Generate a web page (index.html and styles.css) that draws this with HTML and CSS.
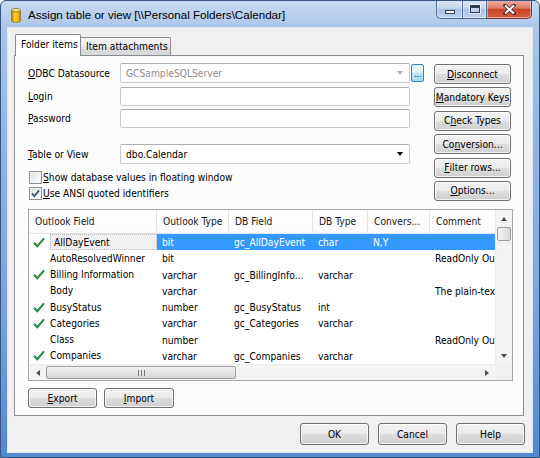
FILE: index.html
```html
<!DOCTYPE html>
<html>
<head>
<meta charset="utf-8">
<title>Assign table or view</title>
<link rel="stylesheet" href="styles.css">
</head>
<body>
<div class="window">
  <div class="titlebar">
    <svg class="appicon" width="10" height="15" viewBox="0 0 10 15">
      <defs>
        <linearGradient id="cyl" x1="0" x2="1" y1="0" y2="0">
          <stop offset="0" stop-color="#b87800"/>
          <stop offset="0.35" stop-color="#ffd23c"/>
          <stop offset="0.7" stop-color="#f5bb17"/>
          <stop offset="1" stop-color="#c98600"/>
        </linearGradient>
      </defs>
      <path d="M0.6 2.2 V12.6 A4.4 1.8 0 0 0 9.4 12.6 V2.2 Z" fill="url(#cyl)" stroke="#8a5a00" stroke-width="0.7"/>
      <ellipse cx="5" cy="2.2" rx="4.4" ry="1.7" fill="#ffe680" stroke="#8a5a00" stroke-width="0.7"/>
    </svg>
    <span class="title">Assign table or view [\\Personal Folders\Calendar]</span>
    <div class="caption">
      <div class="cbtn min"><span class="min-ico"></span></div>
      <div class="cbtn max"><span class="max-ico"></span></div>
      <div class="cbtn close">
        <svg width="13" height="11" viewBox="0 0 13 11">
          <path d="M2 1.5 L11 9.5 M11 1.5 L2 9.5" stroke="#3a2a2a" stroke-width="3.6" stroke-linecap="round"/>
          <path d="M2 1.5 L11 9.5 M11 1.5 L2 9.5" stroke="#ffffff" stroke-width="2"/>
        </svg>
      </div>
    </div>
  </div>

  <div class="client">
    <div class="tabs">
      <div class="tab active">Folder items</div>
      <div class="tab">Item attachments</div>
    </div>

    <div class="panel">
      <div class="top">
        <div class="form">
          <div class="row r1">
            <span class="lbl"><u>O</u>DBC Datasource</span>
            <div class="combo disabled"><span class="val">GCSampleSQLServer</span><i class="tri grey"></i></div>
            <div class="dots">...</div>
          </div>
          <div class="row r2">
            <span class="lbl"><u>L</u>ogin</span>
            <div class="edit"></div>
          </div>
          <div class="row r3">
            <span class="lbl"><u>P</u>assword</span>
            <div class="edit"></div>
          </div>
          <div class="row r4">
            <span class="lbl"><u>T</u>able or View</span>
            <div class="combo"><span class="val">dbo.Calendar</span><i class="tri"></i></div>
          </div>
          <div class="cbrow first">
            <span class="cb"></span>
            <span><u>S</u>how database values in floating window</span>
          </div>
          <div class="cbrow">
            <span class="cb">
              <svg width="9" height="9" viewBox="0 0 9 9"><path d="M1 4.6 L3.4 7.2 L8 1.4" fill="none" stroke="#3d4f80" stroke-width="1.7"/></svg>
            </span>
            <span><u>U</u>se ANSI quoted identifiers</span>
          </div>
        </div>
        <div class="side">
          <div class="btn"><u>D</u>isconnect</div>
          <div class="btn"><u>M</u>andatory Keys</div>
          <div class="btn">C<u>h</u>eck Types</div>
          <div class="btn">Co<u>n</u>version...</div>
          <div class="btn"><u>F</u>ilter rows...</div>
          <div class="btn"><u>O</u>ptions...</div>
        </div>
      </div>

      <div class="grid">
        <div class="table">
          <div class="hrow">
            <div class="hc">Outlook Field</div>
            <div class="hc">Outlook Type</div>
            <div class="hc">DB Field</div>
            <div class="hc">DB Type</div>
            <div class="hc">Convers...</div>
            <div class="hc">Comment</div>
          </div>
          <div class="drow sel">
            <div class="c first"><span class="chk"><svg width="12" height="11" viewBox="0 0 12 11"><path d="M1 5.8 L4.3 9.2 L11 1.4" fill="none" stroke="#26893c" stroke-width="2.1"/></svg></span><span class="focus">AllDayEvent</span></div>
            <div class="c">bit</div>
            <div class="c">gc_AllDayEvent</div>
            <div class="c">char</div>
            <div class="c">N,Y</div>
            <div class="c"></div>
          </div>
          <div class="drow">
            <div class="c first"><span class="chk"></span><span>AutoResolvedWinner</span></div>
            <div class="c">bit</div>
            <div class="c"></div>
            <div class="c"></div>
            <div class="c"></div>
            <div class="c">ReadOnly Outlook property</div>
          </div>
          <div class="drow">
            <div class="c first"><span class="chk"><svg width="12" height="11" viewBox="0 0 12 11"><path d="M1 5.8 L4.3 9.2 L11 1.4" fill="none" stroke="#26893c" stroke-width="2.1"/></svg></span><span>Billing Information</span></div>
            <div class="c">varchar</div>
            <div class="c">gc_BillingInfo...</div>
            <div class="c">varchar</div>
            <div class="c"></div>
            <div class="c"></div>
          </div>
          <div class="drow">
            <div class="c first"><span class="chk"></span><span>Body</span></div>
            <div class="c">varchar</div>
            <div class="c"></div>
            <div class="c"></div>
            <div class="c"></div>
            <div class="c">The plain-text body of the item</div>
          </div>
          <div class="drow">
            <div class="c first"><span class="chk"><svg width="12" height="11" viewBox="0 0 12 11"><path d="M1 5.8 L4.3 9.2 L11 1.4" fill="none" stroke="#26893c" stroke-width="2.1"/></svg></span><span>BusyStatus</span></div>
            <div class="c">number</div>
            <div class="c">gc_BusyStatus</div>
            <div class="c">int</div>
            <div class="c"></div>
            <div class="c"></div>
          </div>
          <div class="drow">
            <div class="c first"><span class="chk"><svg width="12" height="11" viewBox="0 0 12 11"><path d="M1 5.8 L4.3 9.2 L11 1.4" fill="none" stroke="#26893c" stroke-width="2.1"/></svg></span><span>Categories</span></div>
            <div class="c">varchar</div>
            <div class="c">gc_Categories</div>
            <div class="c">varchar</div>
            <div class="c"></div>
            <div class="c"></div>
          </div>
          <div class="drow">
            <div class="c first"><span class="chk"></span><span>Class</span></div>
            <div class="c">number</div>
            <div class="c"></div>
            <div class="c"></div>
            <div class="c"></div>
            <div class="c">ReadOnly Outlook property</div>
          </div>
          <div class="drow">
            <div class="c first"><span class="chk"><svg width="12" height="11" viewBox="0 0 12 11"><path d="M1 5.8 L4.3 9.2 L11 1.4" fill="none" stroke="#26893c" stroke-width="2.1"/></svg></span><span>Companies</span></div>
            <div class="c">varchar</div>
            <div class="c">gc_Companies</div>
            <div class="c">varchar</div>
            <div class="c"></div>
            <div class="c"></div>
          </div>
        </div>
        <div class="vscroll">
          <div class="sarrow"><i class="up"></i></div>
          <div class="vthumb"></div>
          <div class="vtrack"></div>
          <div class="sarrow"><i class="down"></i></div>
        </div>
        <div class="hscroll">
          <div class="sarrow h"><i class="left"></i></div>
          <div class="hthumb"><span class="grip"></span></div>
          <div class="htrack"></div>
          <div class="sarrow h"><i class="right"></i></div>
        </div>
        <div class="corner"></div>
      </div>

      <div class="actions">
        <div class="btn export"><u>E</u>xport</div>
        <div class="btn import"><u>I</u>mport</div>
      </div>
    </div>

    <div class="footer">
      <div class="btn fbtn">OK</div>
      <div class="btn fbtn">Cancel</div>
      <div class="btn fbtn">Help</div>
    </div>
  </div>
</div>
</body>
</html>
```

FILE: styles.css
```css
* { box-sizing: border-box; }
html, body { margin: 0; padding: 0; }
body {
  width: 540px;
  height: 458px;
  overflow: hidden;
  background: #ffffff;
  font-family: "DejaVu Sans Condensed", "Liberation Sans", sans-serif;
  font-stretch: condensed;
  font-size: 10.2px;
  color: #000;
}
u { text-decoration: underline; text-underline-offset: 1px; }

.window {
  width: 540px;
  height: 458px;
  border: 1px solid #34557f;
  border-radius: 6px 6px 0 0;
  background: linear-gradient(180deg, #c6daf2 0px, #b8d0ee 14px, #abc6e9 27px, #94b7e3 120px, #7aa5dc 300px, #5189d0 458px);
  display: flex;
  flex-direction: column;
  overflow: hidden;
}

/* title bar */
.titlebar {
  height: 27px;
  display: flex;
  align-items: flex-start;
  flex: 0 0 27px;
}
.appicon { margin: 7px 0 0 10px; flex: 0 0 auto; }
.title {
  margin: 6px 0 0 7px;
  font-family: "Liberation Sans", sans-serif;
  font-stretch: normal;
  font-size: 11.6px;
  line-height: 15px;
  color: #000;
  white-space: nowrap;
}
.caption {
  margin-left: auto;
  margin-right: 7px;
  margin-top: -1px;
  display: flex;
}
.cbtn {
  height: 19px;
  border: 1px solid #4d6b93;
  border-top: none;
  display: flex;
  align-items: center;
  justify-content: center;
  background: linear-gradient(180deg, #dbe7f6 0%, #c4d7ef 45%, #a9c2e5 52%, #bcd2ee 100%);
  box-shadow: inset 0 0 0 1px rgba(255,255,255,0.45);
}
.cbtn.min { width: 26px; border-radius: 0 0 0 5px; border-right: none; }
.cbtn.max { width: 25px; }
.cbtn.close {
  width: 45px;
  border-left: none;
  border-radius: 0 0 5px 0;
  background: linear-gradient(180deg, #eab1a3 0%, #dc7c66 45%, #c7402a 52%, #d6603f 100%);
  border-color: #7a3a32;
}
.min-ico {
  width: 10px; height: 4px; margin-top: 6px;
  background: #fff; border: 1px solid #2e3b52;
}
.max-ico {
  width: 10px; height: 8px;
  border: 1px solid #2e3b52;
  border-top-width: 3px;
  background: rgba(255,255,255,0.2);
  box-shadow: 0 0 0 1px rgba(255,255,255,0.6);
}

/* client */
.client {
  margin: 0 7px;
  height: 424px;
  flex: 0 0 424px;
  background: #f0f0f0;
  box-shadow: 0 0 0 1px #dfe9f6;
  display: flex;
  flex-direction: column;
}

.tabs {
  display: flex;
  align-items: flex-end;
  height: 27px;
  padding: 6px 0 0 7px;
  flex: 0 0 27px;
}
.tab {
  height: 18px;
  padding: 0 5px;
  border: 1px solid #898c95;
  border-bottom: none;
  border-radius: 2px 2px 0 0;
  background: linear-gradient(180deg, #f3f3f3 0%, #ececec 50%, #e0e0e0 51%, #d6d6d6 100%);
  line-height: 17px;
  white-space: nowrap;
}
.tab.active {
  width: 66px;
  height: 22px;
  margin-bottom: -1px;
  background: #ffffff;
  position: relative;
  z-index: 1;
  line-height: 19px;
  padding-left: 5px;
}
.tab:not(.active) { width: 90px; border-left: none; border-radius: 0 2px 0 0; }

.panel {
  margin: 0 8px 0 6px;
  height: 361px;
  flex: 0 0 361px;
  border: 1px solid #898c95;
  background: #fcfcfc;
  padding: 7px 12px 7px 13px;
  display: flex;
  flex-direction: column;
}

.top { display: flex; align-items: flex-start; height: 138px; flex: 0 0 138px; }
.form { width: 396px; display: flex; flex-direction: column; }
.row { display: flex; align-items: center; }
.r1 { height: 20px; }
.r2 { height: 19px; margin-top: 4px; }
.r3 { height: 19px; margin-top: 3px; }
.r4 { height: 20px; margin-top: 16px; }
.lbl { width: 92px; flex: 0 0 92px; white-space: nowrap; }

.edit, .combo {
  width: 290px;
  height: 100%;
  border: 1px solid #c6cad1;
  border-top-color: #abadb3;
  border-radius: 2px;
  background: #fff;
}
.combo { display: flex; align-items: center; padding-left: 5px; }
.combo .val { flex: 1; }
.combo.disabled .val { color: #8d8d8d; }
.tri {
  width: 0; height: 0;
  border-left: 3.5px solid transparent;
  border-right: 3.5px solid transparent;
  border-top: 4px solid #000;
  margin-right: 6px;
}
.tri.grey { border-top-color: #b4b4b4; }

.dots {
  width: 13px; height: 18px;
  margin-left: 1px;
  border: 1px solid #3c7fb1;
  border-radius: 2px;
  background: linear-gradient(180deg, #eaf6fd 0%, #d9f0fc 50%, #bee6fd 51%, #a7d9f5 100%);
  font-size: 9.5px;
  line-height: 18px;
  text-align: center;
  letter-spacing: -0.3px;
  color: #1d3f6b;
  overflow: hidden;
}

.cbrow { display: flex; align-items: center; height: 15px; margin-top: 1px; white-space: nowrap; }
.cbrow.first { margin-top: 6px; }
.cb {
  width: 13px; height: 13px;
  margin: 0 1px 0 1px;
  border: 1px solid #8e8f8f;
  background: linear-gradient(135deg, #dcdcdc 0%, #f4f4f4 60%, #ffffff 100%);
  box-shadow: inset 0 0 0 1px #f4f4f4;
  display: flex; align-items: center; justify-content: center;
}

.side {
  margin-left: 10px;
  margin-top: 1px;
  width: 77px;
  display: flex;
  flex-direction: column;
  gap: 3.4px;
}
.btn {
  height: 20px;
  border: 1px solid #707070;
  border-radius: 3px;
  background: linear-gradient(180deg, #f2f2f2 0%, #ebebeb 48%, #dddddd 52%, #cfcfcf 100%);
  box-shadow: inset 0 0 0 1px rgba(255,255,255,0.7);
  display: flex;
  align-items: center;
  justify-content: center;
  white-space: nowrap;
  color: #000;
}

/* list grid */
.grid {
  margin-top: 8px;
  width: 485px;
  height: 172px;
  flex: 0 0 172px;
  border: 1px solid #a3a6ac;
  display: grid;
  grid-template-columns: 466px 17px;
  grid-template-rows: 154px 16px;
  background: #fff;
}
.table { overflow: hidden; background: #fff; }
.hrow, .drow {
  display: grid;
  grid-template-columns: 128px 72px 84px 55px 62px 200px;
  width: 601px;
}
.hrow { height: 24px; border-bottom: 1px solid #e5e5e5; background: linear-gradient(180deg, #ffffff, #fafafa); }
.hc {
  padding: 1px 0 0 6px;
  line-height: 22px;
  border-right: 1px solid #e5e5e5;
  color: #1a1a1a;
  white-space: nowrap;
  overflow: hidden;
}
.drow { height: 16.25px; }
.c {
  padding: 1px 0 0 5px;
  line-height: 15.25px;
  white-space: nowrap;
  overflow: hidden;
}
.c.first { padding: 0; display: flex; align-items: center; }
.chk { width: 21px; flex: 0 0 21px; padding-left: 4px; display: flex; align-items: center; }
.drow.sel .c:not(.first) { background: #3399ff; color: #fff; }
.focus {
  flex: 1;
  height: 100%;
  background: #f0f0f0;
  border: 1px dotted #b9b9b9;
  padding: 1px 0 0 3px;
  line-height: 13.25px;
}

.vscroll {
  grid-row: 1;
  grid-column: 2;
  display: flex;
  flex-direction: column;
  background: #f3f3f3;
  border-left: 1px solid #ececec;
}
.sarrow {
  height: 17px;
  flex: 0 0 17px;
  display: flex;
  align-items: center;
  justify-content: center;
}
.vthumb {
  height: 14px;
  flex: 0 0 14px;
  margin: 0 1px;
  border: 1px solid #9f9f9f;
  border-radius: 2px;
  background: linear-gradient(90deg, #f2f2f2 0%, #e6e6e6 50%, #d6d6d6 100%);
}
.vtrack { flex: 1; }
.up, .down, .left, .right { width: 0; height: 0; display: block; }
.up { border-left: 3.5px solid transparent; border-right: 3.5px solid transparent; border-bottom: 4px solid #4d4d4d; }
.down { border-left: 3.5px solid transparent; border-right: 3.5px solid transparent; border-top: 4px solid #4d4d4d; }
.left { border-top: 3.5px solid transparent; border-bottom: 3.5px solid transparent; border-right: 4px solid #4d4d4d; }
.right { border-top: 3.5px solid transparent; border-bottom: 3.5px solid transparent; border-left: 4px solid #4d4d4d; }

.hscroll {
  grid-row: 2;
  grid-column: 1;
  display: flex;
  background: #f3f3f3;
  border-top: 1px solid #ececec;
}
.sarrow.h { width: 17px; flex: 0 0 17px; height: auto; }
.hthumb {
  width: 190px;
  flex: 0 0 190px;
  margin: 1px 0;
  border: 1px solid #9f9f9f;
  border-radius: 2px;
  background: linear-gradient(180deg, #f2f2f2 0%, #e6e6e6 50%, #d6d6d6 100%);
  display: flex;
  align-items: center;
  justify-content: center;
}
.grip {
  width: 7px; height: 6px;
  background: repeating-linear-gradient(90deg, #777 0 1px, transparent 1px 3px);
}
.htrack { flex: 1; }
.corner { grid-row: 2; grid-column: 2; background: #f0f0f0; }

.actions { display: flex; gap: 7px; margin-top: 7px; height: 20px; }
.btn.export { width: 69px; }
.btn.import { width: 70px; }

.footer {
  margin-top: 7px;
  display: flex;
  justify-content: flex-end;
  gap: 9px;
  padding-right: 7px;
}
.btn.fbtn { width: 69px; height: 22px; }
```
